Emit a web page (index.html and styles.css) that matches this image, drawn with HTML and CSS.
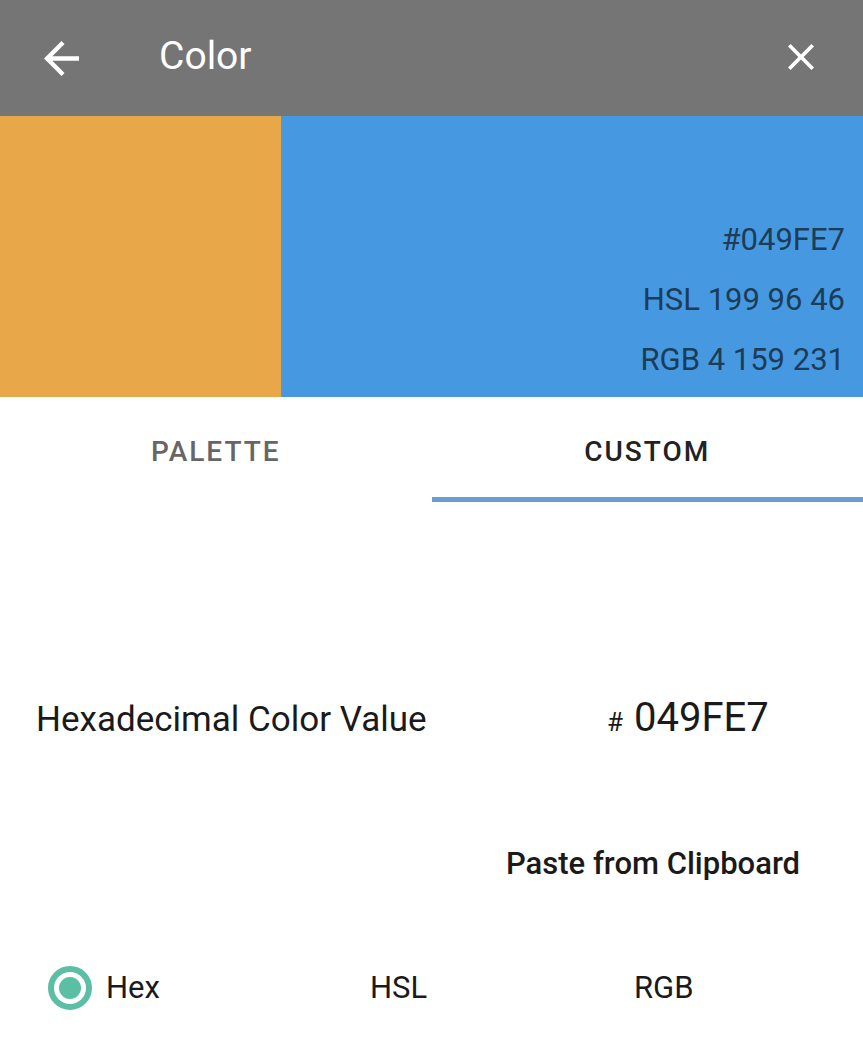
FILE: index.html
```html
<!DOCTYPE html>
<html lang="en">
<head>
<meta charset="utf-8">
<title>Color</title>
<link rel="stylesheet" href="styles.css">
</head>
<body>
<div class="screen">
  <header class="appbar">
    <svg class="icon-back" viewBox="4 4 16 16" width="35" height="35" aria-hidden="true">
      <path d="M20 11H7.83l5.59-5.59L12 4l-8 8 8 8 1.41-1.41L7.83 13H20v-2z" fill="#fff"/>
    </svg>
    <h1 class="title">Color</h1>
    <svg class="icon-close" viewBox="5 5 14 14" width="26" height="26" aria-hidden="true">
      <path d="M19 6.41L17.590 5 12 10.59 6.41 5 5 6.41 10.59 12 5 17.59 6.41 19 12 13.41 17.59 19 19 17.59 13.41 12z" fill="#fff"/>
    </svg>
  </header>

  <section class="swatches">
    <div class="swatch swatch-old"></div>
    <div class="swatch swatch-new">
      <div class="swatch-line">#049FE7</div>
      <div class="swatch-line">HSL 199 96 46</div>
      <div class="swatch-line">RGB 4 159 231</div>
    </div>
  </section>

  <nav class="tabs">
    <div class="tab">PALETTE</div>
    <div class="tab tab-active">CUSTOM</div>
  </nav>

  <section class="custom">
    <div class="hex-row">
      <div class="hex-label">Hexadecimal Color Value</div>
      <div class="hex-value"><span class="hash">#</span><span class="hex-digits">049FE7</span></div>
    </div>
    <div class="paste-row">
      <span class="paste">Paste from Clipboard</span>
    </div>
    <div class="radio-row">
      <label class="option">
        <span class="radio radio-checked"><span class="radio-dot"></span></span>
        <span class="option-label">Hex</span>
      </label>
      <label class="option">
        <span class="radio"></span>
        <span class="option-label">HSL</span>
      </label>
      <label class="option">
        <span class="radio"></span>
        <span class="option-label">RGB</span>
      </label>
    </div>
  </section>
</div>
</body>
</html>
```

FILE: styles.css
```css
* { box-sizing: border-box; }

html, body {
  margin: 0;
  padding: 0;
  background: #ffffff;
}

body {
  font-family: Roboto, "Noto Sans", "Liberation Sans", sans-serif;
  color: #212121;
}

.screen {
  width: 863px;
  height: 1049px;
  overflow: hidden;
}

/* App bar */
.appbar {
  height: 116px;
  background: #757575;
  display: flex;
  align-items: center;
  padding: 0 49px 0 44px;
}

.icon-back {
  display: block;
  flex: none;
  margin-top: 1px;
}

.title {
  margin: 0 0 4px 80px;
  font-size: 39px;
  font-weight: 400;
  color: #ffffff;
  line-height: 1;
  flex: 1;
}

.icon-close {
  display: block;
  flex: none;
  margin-top: -2px;
}

/* Swatches */
.swatches {
  display: flex;
  height: 281px;
}

.swatch-old {
  width: 281px;
  background: #e8a84a;
}

.swatch-new {
  flex: 1;
  background: #4699e0;
  display: flex;
  flex-direction: column;
  justify-content: flex-end;
  align-items: flex-end;
  padding: 0 18px 7px 0;
}

.swatch-line {
  font-size: 31px;
  line-height: 60px;
  color: #1d3c58;
}

/* Tabs */
.tabs {
  display: flex;
  height: 105px;
}

.tab {
  flex: 1;
  text-align: center;
  padding-top: 39px;
  font-size: 28px;
  line-height: 32px;
  font-weight: 500;
  letter-spacing: 2px;
  color: #666666;
}

.tab-active {
  color: #222222;
  border-bottom: 5px solid #689fd2;
}

/* Custom panel */
.custom {
  padding-top: 196px;
}

.hex-row {
  display: grid;
  grid-template-columns: 571px 1fr;
  align-items: baseline;
  padding-left: 36px;
  height: 40px;
}

.hex-label {
  font-size: 35px;
  line-height: 40px;
  color: #1a1a1a;
}

.hex-value {
  display: flex;
  align-items: baseline;
  gap: 11px;
  color: #1a1a1a;
}

.hash {
  font-size: 26px;
  line-height: 40px;
}

.hex-digits {
  font-size: 40px;
  line-height: 40px;
}

.paste-row {
  margin-top: 106px;
  padding-left: 506px;
  height: 40px;
}

.paste {
  font-size: 31px;
  line-height: 40px;
  font-weight: 500;
  color: #1a1a1a;
}

.radio-row {
  margin-top: 82px;
  display: flex;
  align-items: center;
  padding-left: 48px;
  height: 44px;
}

.option {
  width: 264px;
  display: flex;
  align-items: center;
  gap: 14px;
}

.radio {
  width: 44px;
  height: 44px;
  border-radius: 50%;
  border: 6px solid transparent;
  display: flex;
  align-items: center;
  justify-content: center;
  flex: none;
}

.radio-checked {
  border-color: #5bbfa6;
}

.radio-dot {
  width: 22px;
  height: 22px;
  border-radius: 50%;
  background: #5bbfa6;
}

.option-label {
  font-size: 31px;
  line-height: 32px;
  color: #1a1a1a;
}
```
